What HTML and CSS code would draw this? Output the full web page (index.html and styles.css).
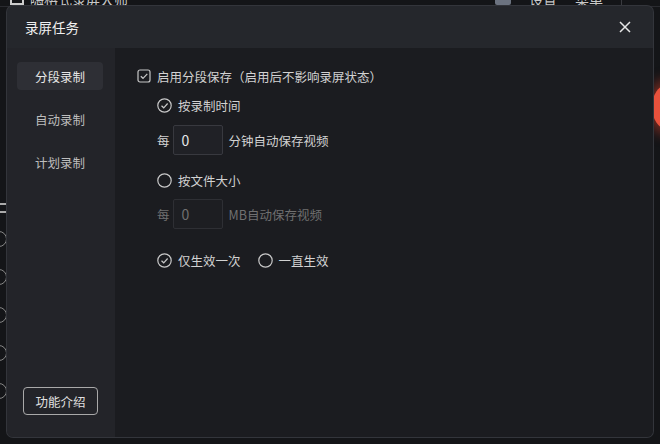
FILE: index.html
```html
<!DOCTYPE html>
<html lang="zh-CN">
<head>
    <meta charset="UTF-8">
    <meta name="viewport" content="width=device-width, initial-scale=1.0">
    <title>录屏任务</title>
    <link rel="stylesheet" href="styles.css">
</head>
<body>
    <!-- 背景主程序 -->
    <div class="app">
        <div class="app-top">
            <div class="app-title"><span class="app-logo"></span>嗨格式录屏大师</div>
            <div class="app-actions">
                <span class="app-avatar"></span>
                <span>设置</span>
                <span>菜单</span>
                <span class="app-sep"></span>
                <span class="app-min"></span>
            </div>
        </div>
        <div class="app-body">
            <div class="app-list">
                <div class="app-lines"></div>
                <span class="app-dot"></span>
                <span class="app-dot"></span>
                <span class="app-dot"></span>
                <span class="app-dot"></span>
                <span class="app-dot"></span>
            </div>
            <div class="app-glow"></div>
        </div>
    </div>

    <!-- 录屏任务弹窗 -->
    <div class="dialog">
        <div class="dialog-head">
            <span class="dialog-title">录屏任务</span>
            <svg class="dialog-close" width="12" height="12" viewBox="0 0 12 12">
                <path d="M1 1L11 11M11 1L1 11" stroke="#e6e6e6" stroke-width="1.5" fill="none"/>
            </svg>
        </div>
        <div class="dialog-main">
            <div class="side">
                <div class="side-tabs">
                    <div class="tab active">分段录制</div>
                    <div class="tab">自动录制</div>
                    <div class="tab">计划录制</div>
                </div>
                <div class="side-btn">功能介绍</div>
            </div>
            <div class="pane">
                <div class="row">
                    <svg class="ico" width="14" height="14" viewBox="0 0 14 14">
                        <rect x="1" y="1" width="12" height="12" rx="2" stroke="#c8c8c8" stroke-width="1.2" fill="none"/>
                        <path d="M3.8 7.2L6 9.3L10.3 4.8" stroke="#c8c8c8" stroke-width="1.2" fill="none"/>
                    </svg>
                    <span>启用分段保存（启用后不影响录屏状态）</span>
                </div>
                <div class="group">
                    <div class="row by-time">
                        <svg class="ico" width="15" height="15" viewBox="0 0 15 15">
                            <circle cx="7.5" cy="7.5" r="6.7" stroke="#c8c8c8" stroke-width="1.2" fill="none"/>
                            <path d="M4.5 7.7L6.7 9.8L10.6 5.5" stroke="#c8c8c8" stroke-width="1.2" fill="none"/>
                        </svg>
                        <span>按录制时间</span>
                    </div>
                    <div class="row field">
                        <span>每</span>
                        <div class="num">0</div>
                        <span>分钟自动保存视频</span>
                    </div>
                    <div class="row by-size">
                        <svg class="ico" width="15" height="15" viewBox="0 0 15 15">
                            <circle cx="7.5" cy="7.5" r="6.7" stroke="#c8c8c8" stroke-width="1.2" fill="none"/>
                        </svg>
                        <span>按文件大小</span>
                    </div>
                    <div class="row field off">
                        <span>每</span>
                        <div class="num">0</div>
                        <span>MB自动保存视频</span>
                    </div>
                    <div class="row once">
                        <svg class="ico" width="15" height="15" viewBox="0 0 15 15">
                            <circle cx="7.5" cy="7.5" r="6.7" stroke="#c8c8c8" stroke-width="1.2" fill="none"/>
                            <path d="M4.5 7.7L6.7 9.8L10.6 5.5" stroke="#c8c8c8" stroke-width="1.2" fill="none"/>
                        </svg>
                        <span>仅生效一次</span>
                        <svg class="ico gap" width="15" height="15" viewBox="0 0 15 15">
                            <circle cx="7.5" cy="7.5" r="6.7" stroke="#c8c8c8" stroke-width="1.2" fill="none"/>
                        </svg>
                        <span>一直生效</span>
                    </div>
                </div>
            </div>
        </div>
    </div>
</body>
</html>
```

FILE: styles.css
```css
body {
    margin: 0;
    width: 660px;
    height: 444px;
    overflow: hidden;
    background-color: #141518;
    font-family: "Noto Sans CJK SC", "Noto Sans", sans-serif;
    font-size: 12.5px;
    color: #d2d2d2;
    position: relative;
}

/* 背景主程序 */
.app {
    height: 444px;
    display: flex;
    flex-direction: column;
}

.app-top {
    height: 14px;
    margin-top: -8px;
    display: flex;
    justify-content: space-between;
    align-items: center;
    padding: 0 8px 0 10px;
    border-bottom: 1px solid #2a2b30;
    color: #c8c8c8;
    font-size: 14px;
}

.app-title {
    display: flex;
    align-items: center;
    gap: 6px;
}

.app-logo {
    width: 10px;
    height: 10px;
    border: 2px solid #ccc;
    border-top: none;
}

.app-actions {
    display: flex;
    align-items: center;
    gap: 18px;
}

.app-avatar {
    width: 16px;
    height: 12px;
    background-color: #6c7380;
    border-radius: 2px;
}

.app-sep {
    width: 1px;
    height: 16px;
    background-color: #3a3b40;
}

.app-min {
    width: 12px;
    height: 2px;
    background-color: #ccc;
}

.app-body {
    flex: 1;
    display: flex;
    justify-content: space-between;
}

.app-list {
    width: 40px;
    padding-top: 196px;
    display: flex;
    flex-direction: column;
    gap: 22px;
}

.app-lines {
    width: 8px;
    height: 6px;
    border-top: 2px solid #aaa;
    border-bottom: 2px solid #aaa;
    margin-bottom: -4px;
}

.app-dot {
    width: 14px;
    height: 14px;
    border: 1px solid #888;
    border-radius: 50%;
    margin-left: -9px;
}

.app-glow {
    width: 30px;
    height: 44px;
    margin-top: 78px;
    margin-right: -22px;
    border-radius: 50%;
    background-color: #e8513c;
    box-shadow: 0 0 12px 6px rgba(200, 60, 40, 0.5);
}

/* 弹窗 */
.dialog {
    position: absolute;
    left: 7px;
    top: 6px;
    width: 646px;
    height: 431px;
    border-radius: 6px;
    overflow: hidden;
    display: flex;
    flex-direction: column;
    background-color: #25272c;
    box-shadow: 0 0 0 1px #33353b;
}

.dialog-head {
    height: 42px;
    flex-shrink: 0;
    display: flex;
    align-items: center;
    justify-content: space-between;
    padding: 0 22px 0 18px;
}

.dialog-title {
    font-size: 13.5px;
    color: #f0f0f0;
}

.dialog-main {
    flex: 1;
    display: flex;
}

.side {
    width: 108px;
    background-color: #232429;
    display: flex;
    flex-direction: column;
    justify-content: space-between;
    padding: 14px 0 22px 0;
}

.side-tabs {
    display: flex;
    flex-direction: column;
    gap: 15px;
}

.tab {
    height: 28px;
    margin: 0 12px 0 10px;
    border-radius: 4px;
    display: flex;
    align-items: center;
    justify-content: center;
    color: #bdbdbd;
}

.tab.active {
    background-color: #2e2f35;
    color: #e6e6e6;
}

.side-btn {
    height: 26px;
    margin: 0 17px 0 16px;
    border: 1px solid #a9a9a9;
    border-radius: 4px;
    display: flex;
    align-items: center;
    justify-content: center;
    color: #e0e0e0;
}

.pane {
    flex: 1;
    background-color: #1b1c20;
    padding: 18px 0 0 22px;
}

.row {
    height: 20px;
    display: flex;
    align-items: center;
}

.ico {
    margin-right: 6px;
    flex-shrink: 0;
}

.ico.gap {
    margin-left: 17px;
}

.group {
    padding-left: 20px;
    display: flex;
    flex-direction: column;
}

.by-time {
    margin-top: 9px;
}

.field {
    height: 30px;
    margin-top: 10px;
}

.by-size {
    margin-top: 15px;
}

.off {
    margin-top: 9px;
    color: #707070;
}

.once {
    margin-top: 21px;
}

.num {
    width: 40px;
    height: 28px;
    margin: 0 6px 0 3px;
    padding-left: 8px;
    border: 1px solid #38393f;
    background-color: #202126;
    border-radius: 2px;
    display: flex;
    align-items: center;
    color: #e6e6e6;
    font-size: 14px;
}

.off .num {
    color: #707070;
    border-color: #2e2f34;
    background-color: #1d1e22;
}
```
